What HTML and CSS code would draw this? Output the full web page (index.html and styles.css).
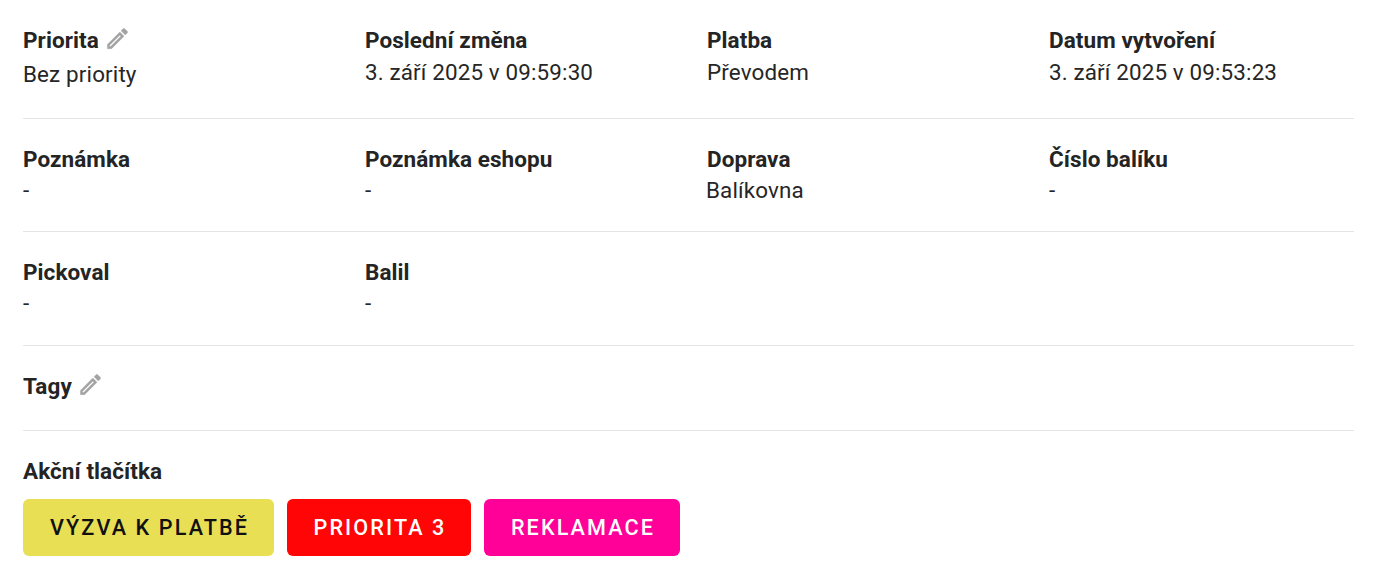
FILE: index.html
```html
<!DOCTYPE html>
<html lang="cs">
<head>
<meta charset="utf-8">
<title>Objednávka</title>
<link rel="stylesheet" href="styles.css">
</head>
<body>
<main class="panel">
  <section class="row row-first">
    <div class="cell"><div class="label">Priorita <svg class="pen" viewBox="0 0 24 24"><path d="M3 17.25V21h3.75L17.81 9.94l-3.75-3.75L3 17.25zM5.92 19H5v-.92l9.06-9.06.92.92L5.92 19zM20.71 7.04a1 1 0 0 0 0-1.41l-2.34-2.34a1 1 0 0 0-1.41 0l-1.83 1.83 3.75 3.75 1.83-1.83z"/></svg></div><div class="value value-low">Bez priority</div></div>
    <div class="cell"><div class="label">Poslední změna</div><div class="value">3. září 2025 v 09:59:30</div></div>
    <div class="cell"><div class="label">Platba</div><div class="value">Převodem</div></div>
    <div class="cell"><div class="label">Datum vytvoření</div><div class="value">3. září 2025 v 09:53:23</div></div>
  </section>
  <section class="row row-second">
    <div class="cell"><div class="label">Poznámka</div><div class="value">-</div></div>
    <div class="cell"><div class="label">Poznámka eshopu</div><div class="value">-</div></div>
    <div class="cell"><div class="label">Doprava</div><div class="value value-nudge">Balíkovna</div></div>
    <div class="cell"><div class="label">Číslo balíku</div><div class="value">-</div></div>
  </section>
  <section class="row row-third">
    <div class="cell"><div class="label">Pickoval</div><div class="value">-</div></div>
    <div class="cell"><div class="label">Balil</div><div class="value">-</div></div>
  </section>
  <section class="tags">
    <div class="label">Tagy <svg class="pen" viewBox="0 0 24 24"><path d="M3 17.25V21h3.75L17.81 9.94l-3.75-3.75L3 17.25zM5.92 19H5v-.92l9.06-9.06.92.92L5.92 19zM20.71 7.04a1 1 0 0 0 0-1.41l-2.34-2.34a1 1 0 0 0-1.41 0l-1.83 1.83 3.75 3.75 1.83-1.83z"/></svg></div>
  </section>
  <section class="actions">
    <div class="label">Akční tlačítka</div>
    <div class="buttons">
      <button class="btn btn-yellow">Výzva k platbě</button>
      <button class="btn btn-red">Priorita 3</button>
      <button class="btn btn-pink">Reklamace</button>
    </div>
  </section>
</main>
</body>
</html>
```
FILE: styles.css
```css
* { box-sizing: border-box; }
html, body { margin: 0; padding: 0; background: #fff; }
body { font-family: Roboto, "Liberation Sans", sans-serif; color: #212121; font-size: 20px; }
.panel { padding: 0 27px 0 23px; }
.row { display: grid; grid-template-columns: repeat(4, 342px); padding-top: 26px; border-bottom: 1px solid #e5e5e5; }
.row-first { height: 119px; }
.row-second { height: 113px; }
.row-third { height: 114px; }
.label { font-weight: 700; font-size: 22.5px; letter-spacing: 0.07px; line-height: 28px; display: flex; align-items: center; gap: 5.5px; color: #242424; }
.value { font-size: 22.4px; line-height: 34px; font-weight: 400; letter-spacing: 0.15px; color: #262626; }
.row-first .value { margin-top: 1px; }
.row-first .value-low { margin-top: 3px; }
.value-nudge { margin-left: -1px; }
.pen { width: 27px; height: 27px; margin-top: -3px; fill: #a3a3a3; stroke: #a3a3a3; stroke-width: 0.3; }
.tags { height: 85px; padding-top: 26px; border-bottom: 1px solid #e5e5e5; }
.actions { padding-top: 26px; }
.buttons { display: flex; gap: 12.5px; margin-top: 14px; }
.btn { height: 57px; padding: 0 25px 0 27px; border: 0; border-radius: 6px; font-family: inherit; font-size: 21.6px; font-weight: 500; letter-spacing: 2.1px; text-transform: uppercase; }
.btn-yellow { background: #e9df55; color: #111; }
.btn-red { background: #ff0505; color: #fff; }
.btn-pink { background: #ff0099; color: #fff; }
```
